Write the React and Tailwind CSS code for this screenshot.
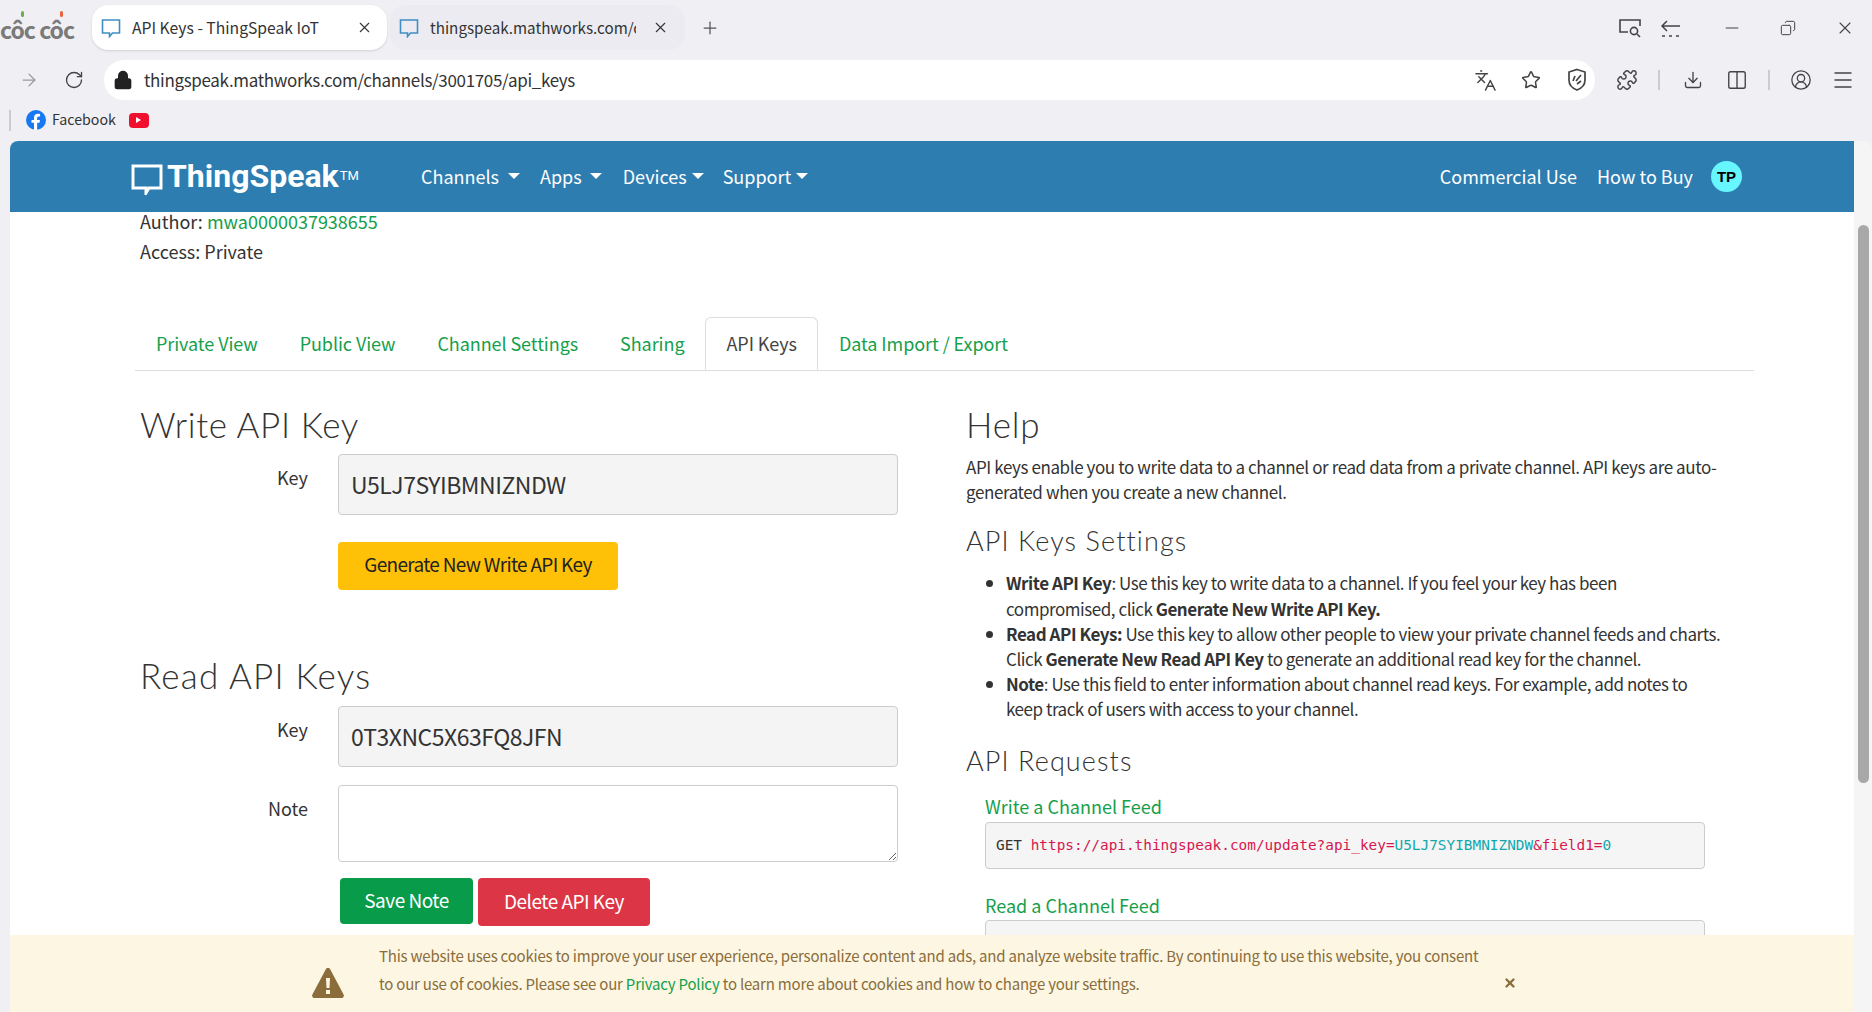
import { ArrowRight, RotateCw, Lock, Star, Languages, Puzzle, Download, Columns2, CircleUserRound, Menu, X, Plus, Minus, Copy } from "lucide-react";

const bodyFont = "font-['Noto_Sans_CJK_SC','Noto_Sans',sans-serif]";

function TabIcon() {
  return (
    <svg width="20" height="20" viewBox="0 0 20 20" fill="none" stroke="#3f8fc4" strokeWidth="1.6" className="shrink-0">
      <path d="M1.5 2h17v13h-7l-3 3.5V15h-7z" />
    </svg>
  );
}

function CaretDown({ gap }) {
  return <span className={`inline-block border-x-[6px] border-t-[6px] border-x-transparent border-t-white align-middle ${gap}`} />;
}

function NavLink({ label, gap, caretGap }) {
  return (
    <span className={`flex items-center text-[18px] text-white ${gap}`}>
      {label}
      <CaretDown gap={caretGap} />
    </span>
  );
}

function PageTab({ label, active }) {
  if (active) {
    return (
      <div className="-mb-px flex h-[53px] items-center rounded-t-md border border-b-white border-[#dddddd] bg-white px-5 text-[#444444]">
        {label}
      </div>
    );
  }
  return <div className="flex h-[53px] items-center px-[21px] text-[#15a04b]">{label}</div>;
}

function ApiKeyField({ value, className }) {
  return (
    <div className={`flex h-[61px] items-center rounded border border-[#cccccc] bg-[#f4f4f4] px-3 text-[23px] tracking-[-0.5px] text-[#333333] ${className}`}>
      {value}
    </div>
  );
}

function App() {
  return (
    <div className={`flex h-screen w-full flex-col overflow-hidden bg-[#efeff4] ${bodyFont}`}>
      {/* Tab strip */}
      <div className="flex h-[60px] items-center pb-[5px]">
        <div className="relative w-[92px] shrink-0 pt-[3px] text-[23px] leading-none font-bold tracking-[-1px] text-[#7a7a7a]">
          côc côc
          <span className="absolute left-[21px] top-[-4px] h-[6px] w-[3px] rounded-full bg-[#6ab04c]" />
          <span className="absolute left-[60px] top-[-4px] h-[6px] w-[3px] rounded-full bg-[#e8643c]" />
        </div>
        <div className="flex h-[45px] w-[295px] items-center rounded-2xl bg-white pl-[9px] pr-[14px] shadow">
          <TabIcon />
          <span className="ml-[11px] flex-1 text-[15.700px] text-[#333333]">API Keys - ThingSpeak IoT</span>
          <X size={17} strokeWidth={1.5} className="text-[#333333]" />
        </div>
        <div className="ml-[3px] flex h-[45px] w-[295px] items-center rounded-2xl bg-[#ebebf1] pl-[9px] pr-[16px]">
          <TabIcon />
          <span className="ml-[11px] w-[206px] overflow-hidden text-[15.200px] whitespace-nowrap text-[#333333]">thingspeak.mathworks.com/c</span>
          <X size={17} strokeWidth={1.5} className="ml-auto text-[#333333]" />
        </div>
        <Plus size={20} strokeWidth={1.5} className="ml-[15px] text-[#555555]" />
        <div className="ml-auto flex items-center text-[#444444]">
          <svg width="24" height="20" viewBox="0 0 24 20" fill="none" stroke="currentColor" strokeWidth="1.6">
            <path d="M10 14H2V2h20v6" />
            <circle cx="16" cy="13" r="3.6" />
            <path d="M19 16l3 3" />
          </svg>
          <svg width="24" height="20" viewBox="0 0 24 20" fill="none" stroke="currentColor" strokeWidth="1.5" className="ml-[18px]">
            <path d="M7 3L2 8l5 5M2 8h18M2 18h3M9 18h3M16 18h3" />
          </svg>
          <Minus size={20} strokeWidth={1.3} className="ml-[38px]" />
          <Copy size={16} strokeWidth={1.5} className="ml-[38px] -scale-x-100" />
          <X size={20} strokeWidth={1.3} className="ml-[39px] mr-[17px]" />
        </div>
      </div>

      {/* Address bar */}
      <div className="flex h-[40px] items-center">
        <ArrowRight size={20} strokeWidth={1.5} className="ml-[19px] text-[#999999]" />
        <RotateCw size={20} strokeWidth={1.6} className="ml-[25px] text-[#444444]" />
        <div className="ml-[20px] flex h-[40px] w-[1491px] items-center rounded-full bg-white pl-[9px] pr-[8px]">
          <Lock size={20} fill="#222222" className="text-[#222222]" />
          <span className="ml-[11px] flex-1 text-[17px] tracking-[-0.33px] text-[#333333]">thingspeak.mathworks.com/channels/3001705/api_keys</span>
          <Languages size={23} strokeWidth={1.5} className="text-[#444444]" />
          <Star size={20} strokeWidth={1.8} className="ml-[24px] text-[#444444]" />
          <svg width="20" height="24" viewBox="0 0 20 24" fill="none" stroke="#444444" strokeWidth="1.7" className="ml-[26px]">
            <path d="M10 1.5l8 2.5v8c0 5-4 8.500-8 10-4-1.500-8-5-8-10V4z" />
            <path d="M6 13l2-5M9 13l5-6M10 16l4-3" />
          </svg>
        </div>
        <Puzzle size={22} strokeWidth={1.6} className="ml-[21px] text-[#444444]" />
        <div className="ml-[20px] h-[20px] w-[2px] bg-[#cccccc]" />
        <Download size={20} strokeWidth={1.6} className="ml-[23px] text-[#444444]" />
        <Columns2 size={22} strokeWidth={1.5} className="ml-[23px] text-[#444444]" />
        <div className="ml-[20px] h-[20px] w-[2px] bg-[#cccccc]" />
        <CircleUserRound size={22} strokeWidth={1.4} className="ml-[20px] text-[#444444]" />
        <Menu size={24} strokeWidth={1.4} className="ml-[19px] text-[#444444]" />
      </div>

      {/* Bookmarks */}
      <div className="flex h-[41px] items-center pb-[1px]">
        <div className="ml-[9px] h-[21px] w-[2px] bg-[#cccccc]" />
        <svg width="20" height="20" viewBox="0 0 20 20" className="ml-[15px]">
          <circle cx="10" cy="10" r="10" fill="#1877f2" />
          <path d="M13.500 12.800l.45-2.900h-2.800V8c0-.8.400-1.600 1.650-1.600h1.270V3.950s-1.150-.2-2.250-.2c-2.300 0-3.800 1.400-3.800 3.900v2.250H5.500v2.900h2.520V20h3.130v-7.200z" fill="#ffffff" />
        </svg>
        <span className="ml-[6px] text-[14.200px] text-[#333333]">Facebook</span>
        <div className="ml-[13px] flex h-[15px] w-[20px] items-center justify-center rounded-[4px] bg-[#f00f2f]">
          <span className="border-y-[3px] border-l-[5px] border-y-transparent border-l-white" />
        </div>
      </div>

      {/* Viewport */}
      <div className="flex min-h-0 flex-1 pl-[10px]">
        <div className="relative min-w-0 flex-1 overflow-hidden rounded-tl-lg bg-white text-[17px] leading-[25.200px] tracking-[-0.4px] text-[#333333]">
          <header className="flex h-[71px] items-center bg-[#2e7db1] pl-[121px] pr-[112px] tracking-normal">
            <svg width="32" height="32" viewBox="0 0 32 32" fill="none" stroke="#ffffff" strokeWidth="3" className="mt-[5px] shrink-0">
              <path d="M2 3h28v22H18l-3 5v-5H2z" />
            </svg>
            <span className="ml-[4px] w-[254px] text-[32px] font-bold text-white font-['Roboto',sans-serif]">
              ThingSpeak<sup className="ml-[1px] text-[13px] font-normal">TM</sup>
            </span>
            <NavLink label="Channels" gap="mr-[20px]" caretGap="ml-[9px]" />
            <NavLink label="Apps" gap="mr-[21px]" caretGap="ml-[8px]" />
            <NavLink label="Devices" gap="mr-[19px]" caretGap="ml-[5px]" />
            <NavLink label="Support" gap="" caretGap="ml-[5px]" />
            <span className="ml-auto text-[18px] text-white">Commercial Use</span>
            <span className="ml-[20px] text-[18px] text-white">How to Buy</span>
            <div className="ml-[18px] flex h-[31px] w-[31px] items-center justify-center rounded-full bg-[#66f6ff] text-[15px] font-bold text-black font-['Liberation_Sans',sans-serif]">
              TP
            </div>
          </header>

          <main className="pl-[130px] pr-[100px]">
            <p className="mt-[-3px] text-[18px] tracking-normal">
              Author: <span className="text-[#15a04b]">mwa0000037938655</span>
            </p>
            <p className="mt-[5px] text-[18px] tracking-normal">Access: Private</p>

            {/* Tabs */}
            <nav className="mt-[53px] ml-[-5px] flex border-b border-[#dddddd] text-[18px] tracking-[-0.07px]">
              <PageTab label="Private View" />
              <PageTab label="Public View" />
              <PageTab label="Channel Settings" />
              <PageTab label="Sharing" />
              <PageTab label="API Keys" active />
              <PageTab label="Data Import / Export" />
            </nav>

            <div className="grid grid-cols-[826px_1fr]">
              {/* Left column */}
              <section>
                <h1 className="mt-[32px] text-[35px] leading-[42px] font-light tracking-[0.6px] font-['Lato',sans-serif]">Write API Key</h1>
                <div className="mt-[9px] flex text-[18px] tracking-normal">
                  <label className="w-[168px] pt-[11px] text-right">Key</label>
                  <ApiKeyField value="U5LJ7SYIBMNIZNDW" className="ml-[30px] w-[560px]" />
                </div>
                <button className="ml-[198px] mt-[27px] block h-[48px] w-[280px] rounded bg-[#ffc107] pb-[6px] text-[19px] tracking-[-0.7px] text-[#222222]">
                  Generate New Write API Key
                </button>
                <h1 className="mt-[64px] text-[35px] leading-[42px] font-light tracking-[1.2px] font-['Lato',sans-serif]">Read API Keys</h1>
                <div className="mt-[10px] flex text-[18px] tracking-normal">
                  <label className="w-[168px] pt-[11px] text-right">Key</label>
                  <ApiKeyField value="0T3XNC5X63FQ8JFN" className="ml-[30px] w-[560px]" />
                </div>
                <div className="mt-[18px] flex text-[18px] tracking-normal">
                  <label className="w-[168px] pt-[11px] text-right">Note</label>
                  <textarea className="ml-[30px] h-[77px] w-[560px] rounded border border-[#cccccc] bg-white" />
                </div>
                <div className="ml-[200px] mt-[16px] flex items-start">
                  <button className="h-[46px] w-[133px] rounded bg-[#089b4a] pb-[4px] text-[19px] tracking-[-0.5px] text-white">Save Note</button>
                  <button className="ml-[5px] h-[48px] w-[172px] rounded bg-[#dc3545] pb-[4px] text-[19px] tracking-[-0.5px] text-white">Delete API Key</button>
                </div>
              </section>

              {/* Right column */}
              <section>
                <h1 className="mt-[32px] text-[35px] leading-[42px] font-light tracking-[0.8px] font-['Lato',sans-serif]">Help</h1>
                <p className="mt-[9px] leading-[25px]">
                  API keys enable you to write data to a channel or read data from a private channel. API keys are auto-
                  <br />
                  generated when you create a new channel.
                </p>
                <h2 className="mt-[20px] text-[27px] leading-[34px] font-light tracking-[1.1px] font-['Lato',sans-serif]">API Keys Settings</h2>
                <ul className="mt-[12px] list-disc pl-[40px] tracking-[-0.46px]">
                  <li>
                    <b>Write API Key</b>: Use this key to write data to a channel. If you feel your key has been
                    <br />
                    compromised, click <b>Generate New Write API Key.</b>
                  </li>
                  <li>
                    <b>Read API Keys:</b> Use this key to allow other people to view your private channel feeds and charts.
                    <br />
                    Click <b>Generate New Read API Key</b> to generate an additional read key for the channel.
                  </li>
                  <li>
                    <b>Note</b>: Use this field to enter information about channel read keys. For example, add notes to
                    <br />
                    keep track of users with access to your channel.
                  </li>
                </ul>
                <h2 className="mt-[22px] text-[27px] leading-[34px] font-light tracking-[1.1px] font-['Lato',sans-serif]">API Requests</h2>
                <div className="ml-[19px]">
                  <p className="mt-[16px] text-[18px] tracking-normal text-[#15a04b]">Write a Channel Feed</p>
                  <pre className="mt-[3px] flex h-[47px] w-[720px] items-center rounded border border-[#cccccc] bg-[#f5f5f5] px-[10px] text-[14.400px] tracking-normal font-['DejaVu_Sans_Mono',monospace]">
                    <span className="text-[#333333]">GET </span>
                    <span className="text-[#d6174f]">https://api.thingspeak.com/update?api_key=</span>
                    <span className="text-[#11a8ad]">U5LJ7SYIBMNIZNDW</span>
                    <span className="text-[#d6174f]">&amp;field1=</span>
                    <span className="text-[#11a8ad]">0</span>
                  </pre>
                  <p className="mt-[24px] text-[18px] tracking-normal text-[#15a04b]">Read a Channel Feed</p>
                  <pre className="mt-[2px] h-[47px] w-[720px] rounded border border-[#cccccc] bg-[#f5f5f5]" />
                </div>
              </section>
            </div>
          </main>

          {/* Cookie notice */}
          <div className="absolute inset-x-0 bottom-0 flex h-[77px] bg-[#fcf6e2] text-[15px] tracking-[-0.2px] text-[#8a6d3b]">
            <svg width="32" height="30" viewBox="0 0 32 30" className="ml-[302px] mt-[33px] shrink-0">
              <path fillRule="evenodd" fill="#8a6d3b" d="M16 0c1 0 1.800.5 2.300 1.400l13.300 25.200c.8 1.500-.3 3.400-2 3.400H2.400c-1.700 0-2.800-1.900-2-3.400L13.700 1.400C14.200.5 15 0 16 0zm-2 10l.5 10h3l.5-10zm0 12v4h4v-4z" />
            </svg>
            <div className="ml-[35px] w-[1105px] pt-[7px] leading-[28px]">
              This website uses cookies to improve your user experience, personalize content and ads, and analyze website traffic. By continuing to use this website, you consent to our use of cookies. Please see our <span className="text-[#15a04b]">Privacy Policy</span> to learn more about cookies and how to change your settings.
            </div>
            <X size={14} strokeWidth={4} className="ml-[19px] mt-[41px]" />
          </div>
        </div>

        {/* Scrollbar */}
        <div className="w-[18px] shrink-0 rounded-tr-lg bg-[#f5f5f5] pt-[84px]">
          <div className="mx-auto h-[558px] w-[11px] rounded-full bg-[#a8a8a8]" />
        </div>
      </div>
    </div>
  );
}

export default App;
